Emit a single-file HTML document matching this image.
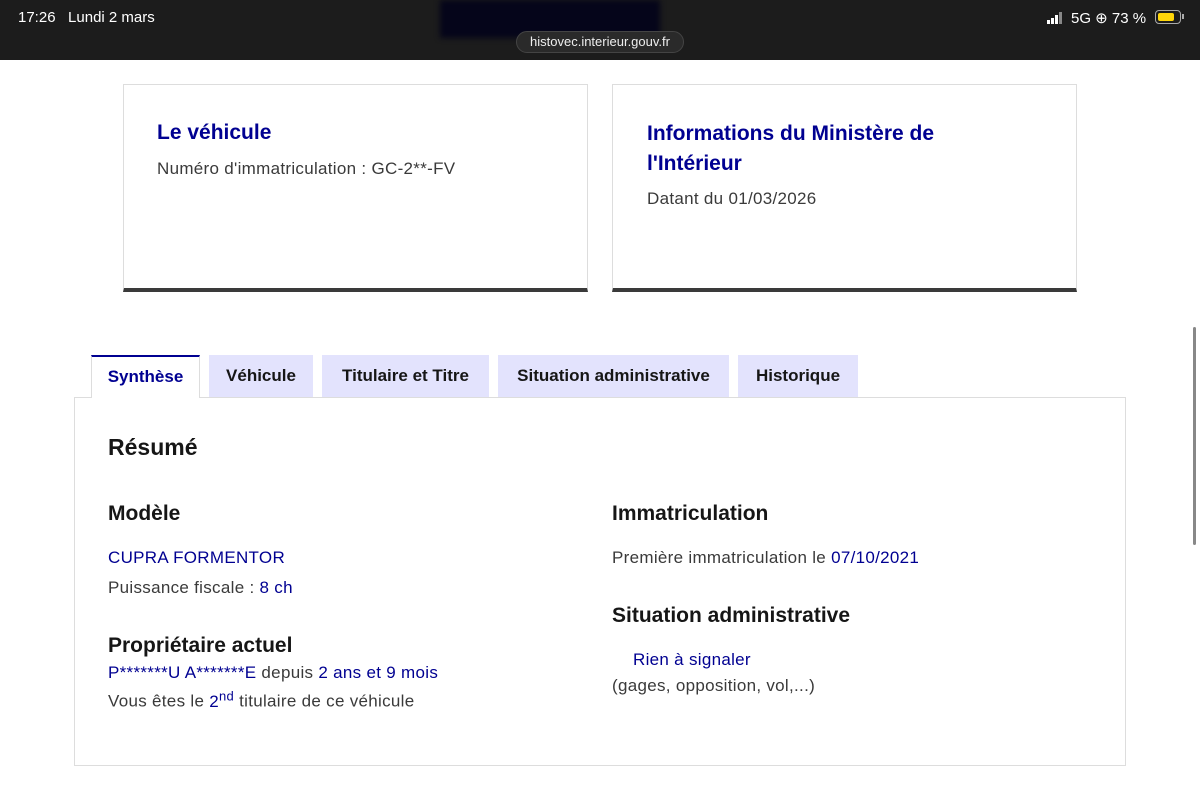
<!DOCTYPE html>
<html><head><meta charset="utf-8"><style>
*{margin:0;padding:0;box-sizing:border-box}
body{width:1200px;height:788px;overflow:hidden;background:#fff;font-family:"Liberation Sans",sans-serif;position:relative;color:#3a3a3a}
.a{position:absolute;white-space:nowrap}
.top{position:absolute;left:0;top:0;width:1200px;height:60px;background:#1c1c1c}
.card{position:absolute;top:84px;height:208px;border:1px solid #ddd;border-bottom:4px solid #3a3a3a;background:#fff}
.blue{color:#000091}
.h{font-weight:bold;color:#161616}
.tab{position:absolute;top:355px;height:42px;background:#e3e3fd;font-weight:bold;font-size:17px;color:#161616;text-align:center;line-height:42px}
.t{letter-spacing:0.3px}
</style></head><body>
<div class="top"></div>
<div class="a" style="left:440px;top:0;width:220px;height:38px;background:#05051a;filter:blur(3px)"></div>
<div class="a" style="left:18px;top:9px;color:#fff;font-size:15px">17:26&nbsp;&nbsp; Lundi 2 mars</div>
<div class="a" style="left:516px;top:31px;width:168px;height:22px;border-radius:11px;background:#2a2a2a;border:1px solid #444;color:#eee;font-size:13px;text-align:center;line-height:20px">histovec.interieur.gouv.fr</div>
<div class="a" style="left:1047px;top:12px;width:20px;height:12px">
<div class="a" style="left:0;top:8px;width:3px;height:4px;background:#fff"></div>
<div class="a" style="left:4px;top:6px;width:3px;height:6px;background:#fff"></div>
<div class="a" style="left:8px;top:3px;width:3px;height:9px;background:#fff"></div>
<div class="a" style="left:12px;top:0;width:3px;height:12px;background:#888"></div></div>
<div class="a" style="left:1071px;top:9px;color:#fff;font-size:15px">5G ⊕ 73 %</div>
<div class="a" style="left:1155px;top:10px;width:26px;height:14px;border:1.5px solid #aaa;border-radius:4px;padding:1.5px"><div style="width:16px;height:8px;background:#ffd60a;border-radius:2px"></div></div>
<div class="a" style="left:1182px;top:14px;width:2px;height:5px;background:#aaa"></div>

<div class="card" style="left:123px;width:465px">
<div class="a blue" style="left:33px;top:36px;font-size:21px;font-weight:bold">Le véhicule</div>
<div class="a t" style="left:33px;top:74px;font-size:17px">Numéro d'immatriculation : GC-2**-FV</div></div>
<div class="card" style="left:612px;width:465px">
<div class="a blue" style="left:34px;top:34px;font-size:21px;font-weight:bold;line-height:30px">Informations du Ministère de<br>l'Intérieur</div>
<div class="a t" style="left:34px;top:104px;font-size:17px">Datant du 01/03/2026</div></div>

<div class="a" style="left:1193px;top:327px;width:3px;height:218px;background:#888;border-radius:2px"></div>

<div class="a" style="left:74px;top:397px;width:1052px;height:369px;border:1px solid #ddd"></div>
<div class="tab" style="left:91px;width:109px;background:#fff;border:1px solid #ddd;border-top:2px solid #000091;border-bottom:none;color:#000091;height:43px;line-height:40px">Synthèse</div>
<div class="tab" style="left:209px;width:104px">Véhicule</div>
<div class="tab" style="left:322px;width:167px">Titulaire et Titre</div>
<div class="tab" style="left:498px;width:231px">Situation administrative</div>
<div class="tab" style="left:738px;width:120px">Historique</div>

<div class="a h" style="left:108px;top:434px;font-size:23px">Résumé</div>
<div class="a h" style="left:108px;top:502px;font-size:21px">Modèle</div>
<div class="a blue t" style="left:108px;top:548px;font-size:17px">CUPRA FORMENTOR</div>
<div class="a t" style="left:108px;top:578px;font-size:17px">Puissance fiscale : <span class="blue">8 ch</span></div>
<div class="a h" style="left:108px;top:634px;font-size:21px">Propriétaire actuel</div>
<div class="a t" style="left:108px;top:663px;font-size:17px"><span class="blue">P*******U A*******E</span> depuis <span class="blue">2 ans et 9 mois</span></div>
<div class="a t" style="left:108px;top:688px;font-size:17px">Vous êtes le <span class="blue">2<sup style="font-size:13px">nd</sup></span> titulaire de ce véhicule</div>

<div class="a h" style="left:612px;top:502px;font-size:21px">Immatriculation</div>
<div class="a t" style="left:612px;top:548px;font-size:17px">Première immatriculation le <span class="blue">07/10/2021</span></div>
<div class="a h" style="left:612px;top:604px;font-size:21px">Situation administrative</div>
<div class="a blue t" style="left:633px;top:650px;font-size:17px">Rien à signaler</div>
<div class="a t" style="left:612px;top:676px;font-size:17px">(gages, opposition, vol,...)</div>
</body></html>
